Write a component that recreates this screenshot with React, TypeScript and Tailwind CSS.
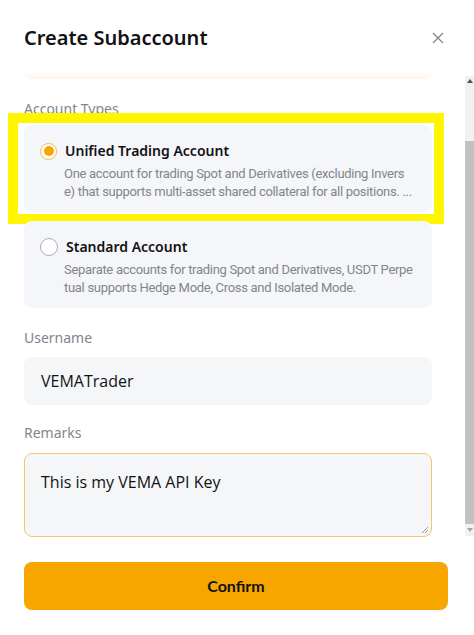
import React from "react";

function Radio({ checked }: { checked: boolean }) {
  return checked ? (
    <span className="flex h-[17px] w-[17px] shrink-0 items-center justify-center rounded-full border border-[#f7b844] bg-white">
      <span className="h-[10px] w-[10px] rounded-full bg-[#f7a600]" />
    </span>
  ) : (
    <span className="h-[18px] w-[18px] shrink-0 rounded-full border border-[#a9afb8] bg-white" />
  );
}

function TypeCard({
  checked,
  title,
  lines,
  highlight,
}: {
  checked: boolean;
  title: string;
  lines: string[];
  highlight?: boolean;
}) {
  return (
    <div className="relative rounded-lg bg-[#f5f6f9] pl-4 pr-3 pt-4 pb-[11px]">
      <div className="flex items-center gap-2">
        <Radio checked={checked} />
        <div className="text-[14px] leading-5 font-semibold text-[#121214]">{title}</div>
      </div>
      <div
        className="mt-1 pl-6 text-[13px] leading-[18px] tracking-[-0.3px] text-[#81858c]"
        style={{ fontFamily: 'Roboto, "Noto Sans", sans-serif' }}
      >
        {lines.map((l, i) => (
          <div key={i} className="whitespace-nowrap">
            {l}
          </div>
        ))}
      </div>
      {highlight && (
        <div className="pointer-events-none absolute -left-4 -right-3 -top-3 -bottom-3 border-[10px] border-[#fff500]" />
      )}
    </div>
  );
}

export default function App() {
  return (
    <div
      className="flex h-[635px] w-[474px] flex-col overflow-hidden bg-white"
      style={{ fontFamily: '"Noto Sans", "Open Sans", sans-serif' }}
    >
      <div className="flex items-center justify-between pl-6 pr-[30px] pt-[24px]">
        <div className="text-[20px] leading-7 font-semibold text-[#121214]">Create Subaccount</div>
        <svg width="12" height="12" viewBox="0 0 12 12" fill="none" stroke="#81858c" strokeWidth="1.3">
          <path d="M1 1 L11 11 M11 1 L1 11" />
        </svg>
      </div>

      <div className="mt-[12px] flex flex-1 min-h-0">
        <div className="w-[408px] ml-6 flex flex-col">
          <div className="h-[15px] rounded-b-lg bg-gradient-to-b from-white via-white to-[#fdf3e6]" />
          <div className="mt-[20px] text-[14px] leading-5 text-[#81858c]">Account Types</div>
          <div className="mt-[6px] flex flex-col gap-[9px]">
            <TypeCard
              checked
              highlight
              title="Unified Trading Account"
              lines={[
                "One account for trading Spot and Derivatives (excluding Invers",
                "e) that supports multi-asset shared collateral for all positions. ...",
              ]}
            />
            <TypeCard
              checked={false}
              title="Standard Account"
              lines={[
                "Separate accounts for trading Spot and Derivatives, USDT Perpe",
                "tual supports Hedge Mode, Cross and Isolated Mode.",
              ]}
            />
          </div>
          <div className="mt-[20px] text-[14px] leading-5 text-[#81858c]">Username</div>
          <div
            className="mt-[9px] flex h-[48px] items-center rounded-lg bg-[#f5f6f8] px-[17px] text-[16px] text-[#121214]"
            style={{ fontFamily: '"Open Sans", "Noto Sans", sans-serif' }}
          >
            VEMATrader
          </div>
          <div className="mt-[18px] text-[14px] leading-5 text-[#81858c]">Remarks</div>
          <div
            className="relative mt-[10px] h-[84px] rounded-lg border border-[#f5c66e] bg-[#f5f6f8] px-4 pt-[16px] text-[16px] leading-6 text-[#121214]"
            style={{ fontFamily: '"Open Sans", "Noto Sans", sans-serif' }}
          >
            This is my VEMA API Key
            <svg className="absolute bottom-[2px] right-[2px]" width="8" height="8" viewBox="0 0 8 8" stroke="#9a9a9a" strokeWidth="1">
              <path d="M7 1 L1 7 M7 4 L4 7" />
            </svg>
          </div>
        </div>
        <div className="ml-auto mt-[12px] mb-[12px] flex w-[9px] flex-col bg-[#f1f1f1]">
          <div className="flex h-[10px] items-center justify-center">
            <svg width="6" height="4" viewBox="0 0 6 4"><path d="M0 4 L3 0 L6 4 Z" fill="#505050" /></svg>
          </div>
          <div className="mt-[55px] flex-1 bg-[#c1c1c1]" />
          <div className="flex h-[12px] items-center justify-center">
            <svg width="6" height="4" viewBox="0 0 6 4"><path d="M0 0 L3 4 L6 0 Z" fill="#a3a3a3" /></svg>
          </div>
        </div>
      </div>

      <div className="px-6 pt-[14px] pb-[25px]">
        <div
          className="flex h-[48px] w-[424px] items-center justify-center rounded-lg bg-[#f7a600] text-[16px] font-bold text-[#121214]"
          style={{ fontFamily: 'Lato, "Noto Sans", sans-serif' }}
        >
          Confirm
        </div>
      </div>
    </div>
  );
}
